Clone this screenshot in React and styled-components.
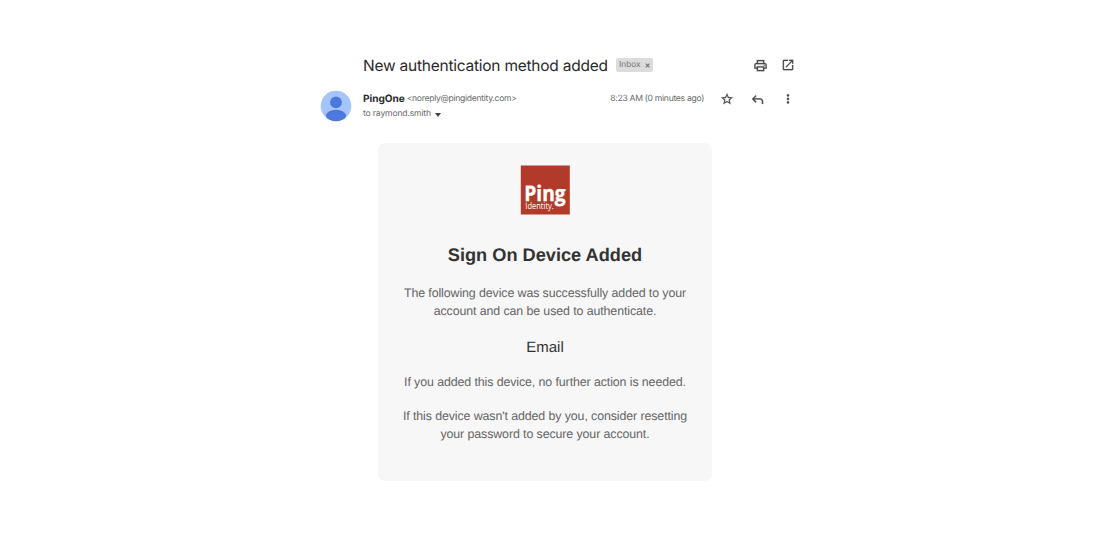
import React from "react";
import styled, { createGlobalStyle } from "styled-components";
import { MdOpenInNew, MdMoreVert, MdOutlinePrint, MdStarBorder } from "react-icons/md";

const GlobalStyle = createGlobalStyle`
  * { box-sizing: border-box; }
  body { margin: 0; background: #fff; }
`;

const Page = styled.main`
  width: 1120px;
  height: 560px;
  padding: 53px 0 0 320px;
  background: #fff;
  overflow: hidden;
  font-family: Inter, "Liberation Sans", sans-serif;
  text-rendering: geometricPrecision;
`;

const SubjectRow = styled.header`
  display: flex;
  align-items: center;
  width: 475px;
  height: 24px;
  padding-left: 43px;
`;

const Subject = styled.h1`
  margin: 0;
  width: 253px;
  font: 400 15.5px/26px Inter, sans-serif;
  letter-spacing: -0.24px;
  color: #2b2b2b;
  white-space: nowrap;
  padding-top: 1px;
`;

const Label = styled.span`
  display: flex;
  align-items: center;
  gap: 4px;
  width: 37px;
  height: 14px;
  padding-left: 3px;
  padding-top: 1px;
  border-radius: 2px;
  background: #dcdcdc;
  color: #747474;
  font-size: 8.3px;
  line-height: 15px;
`;

const Remove = styled.span`
  font-size: 9px;
  font-weight: 600;
`;

const Actions = styled.div`
  display: flex;
  align-items: center;
  gap: ${(p) => p.$gap}px;
  margin-left: auto;
  color: #4a4a4a;

  svg {
    stroke: none;
  }

  path:not([fill="none"]) {
    stroke: currentColor;
    stroke-width: ${(p) => p.$weight || 0.3};
  }
`;

const SenderRow = styled.section`
  display: flex;
  width: 475px;
  height: 32px;
  margin-top: 14px;
`;

const Avatar = styled.svg`
  width: 32px;
  height: 32px;
  margin-top: -1px;
  margin-right: 11px;
`;

const Sender = styled.div`
  display: flex;
  flex-direction: column;
  white-space: nowrap;
`;

const From = styled.div`
  display: flex;
  gap: 2px;
  height: 15px;
  line-height: 16px;
`;

const Name = styled.strong`
  font-size: 10.1px;
  font-weight: 700;
  letter-spacing: -0.05px;
  color: #2b2b2b;
`;

const Meta = styled.span`
  font-size: 8.6px;
  letter-spacing: ${(p) => p.$spacing || 0}px;
  line-height: 17px;
  color: #6c6c6c;
`;

const Recipient = styled.div`
  display: flex;
  align-items: center;
  gap: 4px;
  height: 17px;
`;

const Caret = styled.span`
  border: 3.5px solid transparent;
  border-top: 4px solid #444;
  border-bottom-width: 0;
`;

const MessageTools = styled.div`
  display: flex;
  align-items: center;
  height: 16px;
  margin-left: auto;
  gap: 16px;
`;

const Card = styled.article`
  display: flex;
  flex-direction: column;
  align-items: center;
  width: 334px;
  height: 338px;
  margin: 20px 0 0 58px;
  padding-top: 22px;
  border-radius: 7px;
  background: #f7f7f7;
  font-family: "Liberation Sans", Arial, sans-serif;
  text-align: center;
`;

const Logo = styled.svg`
  width: 50px;
  height: 50px;
  overflow: visible;
`;

const Heading = styled.h2`
  margin: 28px 0 0;
  font-size: 18.2px;
  line-height: 24px;
  color: #333;
`;

const Copy = styled.p`
  margin: ${(p) => p.$top}px 0 0;
  font-size: 12.4px;
  letter-spacing: -0.1px;
  line-height: 18.2px;
  color: #666;
  white-space: nowrap;
`;

const Method = styled.h3`
  margin: 17px 0 0;
  font-size: 15px;
  font-weight: 400;
  line-height: 21px;
  color: #333;
`;

function ReplyIcon() {
  return (
    <svg width="15" height="15" viewBox="0 0 24 24" fill="currentColor">
      <path d="M19 19v-4q0-1.25-.875-2.125T16 12H6.825l3.6 3.6L9 17l-6-6 6-6 1.425 1.4-3.6 3.6H16q2.075 0 3.538 1.463T21 15v4h-2Z" />
    </svg>
  );
}

export default function App() {
  return (
    <>
      <GlobalStyle />
      <Page>
        <SubjectRow>
          <Subject>New authentication method added</Subject>
          <Label><span>Inbox</span><Remove>×</Remove></Label>
          <Actions $gap={13}>
            <MdOutlinePrint size={15} />
            <MdOpenInNew size={14} />
          </Actions>
        </SubjectRow>
        <SenderRow>
          <Avatar viewBox="0 0 32 32">
            <defs><clipPath id="face"><circle cx="16" cy="16" r="15.3" /></clipPath></defs>
            <circle cx="16" cy="16" r="15.3" fill="#a5c3fc" />
            <g fill="#4f78df" clipPath="url(#face)">
              <circle cx="16" cy="12.3" r="5.9" />
              <ellipse cx="16" cy="26" rx="10" ry="6.2" />
            </g>
          </Avatar>
          <Sender>
            <From><Name>PingOne</Name><Meta $spacing={-0.3}>&lt;noreply@pingidentity.com&gt;</Meta></From>
            <Recipient><Meta $spacing={-0.17}>to raymond.smith</Meta><Caret /></Recipient>
          </Sender>
          <MessageTools>
            <Meta $spacing={-0.3}>8:23 AM (0 minutes ago)</Meta>
            <Actions $gap={16} $weight={0.4}>
              <MdStarBorder size={14} />
              <ReplyIcon />
              <MdMoreVert size={14} />
            </Actions>
          </MessageTools>
        </SenderRow>
        <Card>
          <Logo viewBox="0 0 50 50">
            <rect x="0.8" y="0.5" width="49" height="49" fill="#b23a2a" />
            <g fill="#fff" fontFamily="Open Sans, sans-serif">
              <text x="4.3" y="36" fontSize="21.5" fontWeight="700" stroke="#fff" strokeWidth="0.4" textLength="41.3" lengthAdjust="spacingAndGlyphs">Ping</text>
              <text x="5.3" y="44.4" fontSize="9.2" textLength="28.5" lengthAdjust="spacingAndGlyphs">Identity.</text>
            </g>
          </Logo>
          <Heading>Sign On Device Added</Heading>
          <Copy $top={17}>The following device was successfully added to your<br />account and can be used to authenticate.</Copy>
          <Method>Email</Method>
          <Copy $top={15}>If you added this device, no further action is needed.</Copy>
          <Copy $top={15}>If this device wasn't added by you, consider resetting<br />your password to secure your account.</Copy>
        </Card>
      </Page>
    </>
  );
}
